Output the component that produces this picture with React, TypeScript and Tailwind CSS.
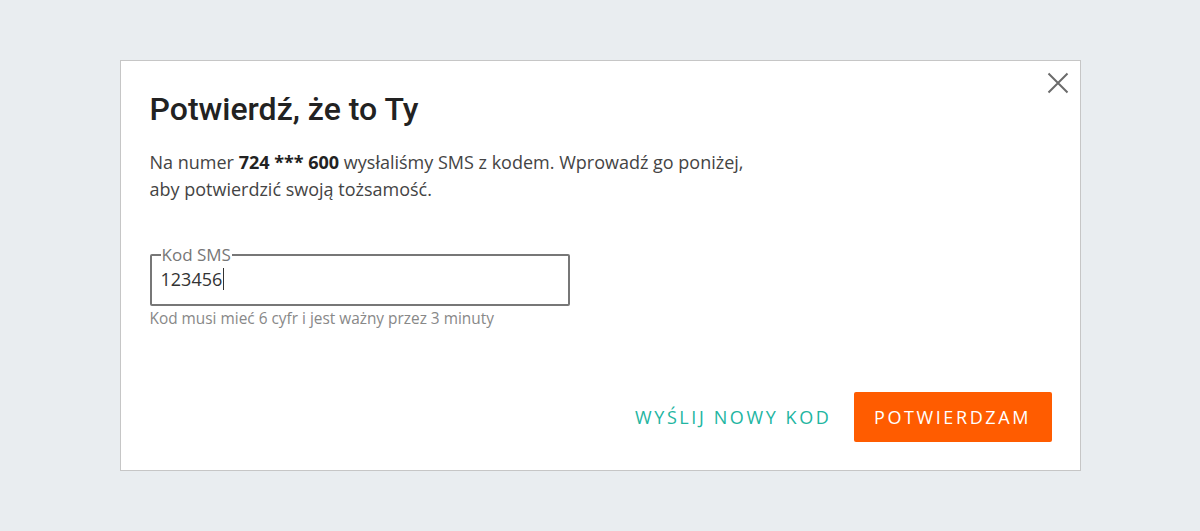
export default function App() {
    return (
        <div className="flex h-[531px] w-full items-center justify-center bg-[#e9edf0] font-['Open_Sans',sans-serif]">
            <div className="relative h-[411px] w-[961px] border border-[#c6c6c6] bg-white pl-[29px] pr-[28px] pt-[28px]">
                <button type="button" aria-label="Zamknij" className="absolute right-[11px] top-[11px] text-[#6b6b6b]">
                    <svg width="22" height="22" viewBox="0 0 22 22" fill="none" stroke="currentColor" strokeWidth="2">
                        <path d="M1.5 1.5L20.5 20.5M20.5 1.5L1.5 20.5" />
                    </svg>
                </button>

                <h1 className="font-['Roboto',sans-serif] text-[32px] font-medium leading-[40px] text-[#222]">
                    Potwierdź, że to Ty
                </h1>

                <p className="mt-[20px] text-[18px] leading-[27px] text-[#444]">
                    Na numer <span className="font-bold text-[#222]">724 *** 600</span> wysłaliśmy SMS z kodem. Wprowadź go poniżej,
                    <br />
                    aby potwierdzić swoją tożsamość.
                </p>

                <fieldset className="mt-[44px] h-[59px] w-[420px] rounded-[2px] border-2 border-[#777] px-[9px]">
                    <legend className="px-[1px] text-[17px] leading-[16px] text-[#777]">Kod SMS</legend>
                    <div className="flex items-center pt-[4px] text-[18px] leading-[24px] text-[#333]">
                        123456
                        <span className="ml-[1px] inline-block h-[22px] w-[1px] bg-[#333]" />
                    </div>
                </fieldset>
                <p className="mt-[3px] text-[15.4px] leading-[20px] text-[#888]">Kod musi mieć 6 cyfr i jest ważny przez 3 minuty</p>

                <div className="mt-[63px] flex items-center justify-end gap-[22px]">
                    <button type="button" className="text-[18px] tracking-[2.6px] text-[#22b5a1]">
                        WYŚLIJ NOWY KOD
                    </button>
                    <button type="button" className="h-[50px] w-[198px] rounded-[2px] bg-[#ff5c00] text-[18px] tracking-[2.6px] text-white">
                        POTWIERDZAM
                    </button>
                </div>
            </div>
        </div>
    );
}
